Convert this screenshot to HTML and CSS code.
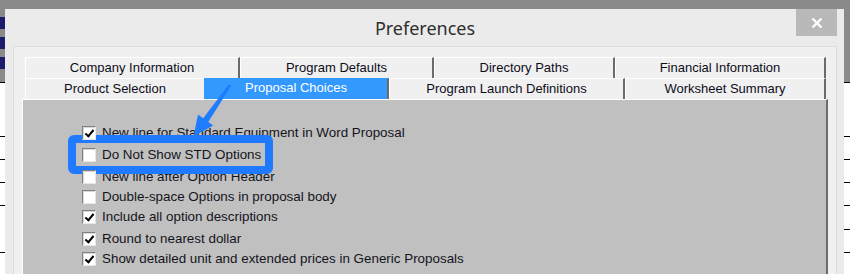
FILE: index.html
```html
<!DOCTYPE html>
<html lang="en">
<head>
  <meta charset="UTF-8" />
  <title>Preferences</title>
  <link rel="stylesheet" href="styles.css">
</head>
<body>
  <div class="screen">
    <div class="edge edge-left">
      <div class="edge-top">
        <span class="bar"></span>
        <span class="bar"></span>
        <span class="bar"></span>
      </div>
      <div class="edge-bottom">
        <span class="tick"></span>
        <span class="tick gap-53"></span>
        <span class="tick gap-22"></span>
        <span class="tick gap-22"></span>
        <span class="tick gap-22"></span>
        <span class="tick gap-46"></span>
      </div>
    </div>

    <div class="dialog">
      <div class="titlebar">
        <span></span>
        <h1 class="title">Preferences</h1>
        <button class="close" aria-label="Close">
          <svg width="12" height="10" viewBox="0 0 12 10">
            <path d="M1.5 0.5 L10.5 9.5 M10.5 0.5 L1.5 9.5" stroke="#fff" stroke-width="2.2" fill="none"/>
          </svg>
        </button>
      </div>

      <div class="frame">
        <div class="tabs">
          <div class="tab-row tab-row-back">
            <div class="tab w-company">Company Information</div>
            <div class="tab w-defaults">Program Defaults</div>
            <div class="tab w-paths">Directory Paths</div>
            <div class="tab w-financial">Financial Information</div>
          </div>
          <div class="tab-row tab-row-front">
            <div class="tab w-product">Product Selection</div>
            <div class="tab tab-active w-proposal">Proposal Choices</div>
            <div class="tab w-launch">Program Launch Definitions</div>
            <div class="tab w-worksheet">Worksheet Summary</div>
          </div>
        </div>

        <div class="panel">
          <div class="highlight"></div>
          <ul class="options">
            <li class="option option-tall"><span class="box checked"></span>New line for Standard Equipment in Word Proposal</li>
            <li class="option option-tall"><span class="box"></span>Do Not Show STD Options</li>
            <li class="option"><span class="box"></span>New line after Option Header</li>
            <li class="option"><span class="box"></span>Double-space Options in proposal body</li>
            <li class="option option-tall"><span class="box checked"></span>Include all option descriptions</li>
            <li class="option"><span class="box checked"></span>Round to nearest dollar</li>
            <li class="option"><span class="box checked"></span>Show detailed unit and extended prices in Generic Proposals</li>
          </ul>
        </div>
      </div>
    </div>

    <div class="edge edge-right">
      <div class="edge-top"></div>
      <div class="edge-bottom">
        <span class="tick"></span>
        <span class="tick gap-53"></span>
        <span class="tick gap-22"></span>
        <span class="tick gap-22"></span>
        <span class="tick gap-22"></span>
        <span class="tick gap-23"></span>
        <span class="tick gap-22"></span>
      </div>
    </div>

    <!-- callout arrow pointing at the highlighted option -->
    <svg class="pointer" width="850" height="274" viewBox="0 0 850 274">
      <polygon points="229,84.3 231.2,85.8 208.2,121.9 213.2,125.6 193.5,136.5 198,114.6 203.2,118.2" fill="#1f7cff"/>
    </svg>
  </div>
</body>
</html>
```

FILE: styles.css
```css
/* Reset & Base */
* {
  box-sizing: border-box;
  margin: 0;
  padding: 0;
}

body {
  font-family: 'Liberation Sans', Arial, sans-serif;
  font-size: 13px;
  color: #111;
  background: #8a8a8a;
  width: 850px;
  height: 274px;
  overflow: hidden;
}

.screen {
  position: relative;
  display: flex;
  height: 274px;
  padding-top: 9px;
  background: #8a8a8a;
}

/* Windows peeking out behind the dialog */
.edge {
  display: flex;
  flex-direction: column;
}

.edge-left {
  width: 5px;
}

.edge-right {
  width: 6px;
}

.edge-top {
  height: 73px;
  padding-top: 8px;
  display: flex;
  flex-direction: column;
  gap: 8px;
}

.bar {
  display: block;
  height: 12px;
  background: #1d1b6c;
}

.edge-bottom {
  flex: 1;
  background: #fff;
  display: flex;
  flex-direction: column;
}

.tick {
  display: block;
  height: 1px;
  background: #000;
}

.gap-22 { margin-top: 22px; }
.gap-23 { margin-top: 23px; }
.gap-46 { margin-top: 46px; }
.gap-53 { margin-top: 53px; }

/* Dialog */
.dialog {
  width: 839px;
  background: #ebebeb;
  padding: 0 7px 0 8px;
  display: flex;
  flex-direction: column;
}

.titlebar {
  height: 37px;
  display: grid;
  grid-template-columns: 1fr auto 1fr;
  align-items: start;
}

.title {
  font-family: 'Noto Sans', sans-serif;
  font-weight: 400;
  font-size: 18px;
  line-height: 24px;
  padding-top: 7px;
  color: #2e2e2e;
}

.close {
  justify-self: end;
  width: 41px;
  height: 27px;
  border: none;
  background: #b9b9b9;
  display: flex;
  align-items: center;
  justify-content: center;
}

.close svg {
  display: block;
}

.frame {
  flex: 1;
  background: #f0f0f0;
  border: 1px solid #dcdcdc;
  border-bottom: none;
  padding-top: 10px;
}

/* Tabs */
.tabs {
  margin-left: 11px;
}

.tab-row {
  display: flex;
  align-items: flex-end;
}

.tab {
  background: #f0f0f0;
  border-top: 1px solid #fff;
  border-left: 1px solid #fff;
  border-right: 2px solid #6b6b6b;
  text-align: center;
  white-space: nowrap;
  color: #0d0d1a;
}

.tab-row-back .tab {
  height: 21px;
  line-height: 20px;
}

.tab-row-front .tab {
  height: 21px;
  line-height: 20px;
}

.tab-active {
  position: relative;
  height: 22px;
  margin-top: -1px;
  margin-bottom: -1px;
  line-height: 18px;
  background: #3399ff;
  border-top-color: #3399ff;
  border-left-color: #3399ff;
  color: #fff;
}

.w-company { width: 215px; }
.w-defaults { width: 194px; }
.w-paths { width: 181px; }
.w-financial { width: 211px; }
.w-product { width: 179px; border-right: none; }
.tab-row-front .w-proposal { width: 185px; height: 22px; line-height: 18px; }
.w-launch { width: 236px; }
.w-worksheet { width: 201px; }

/* Option panel */
.panel {
  position: relative;
  margin-left: 8px;
  width: 806px;
  height: 175px;
  background: #c0c0c0;
  border-top: 1px solid #fff;
  border-left: 1px solid #fff;
  border-right: 2px solid #6b6b6b;
  padding: 23px 0 0 59px;
}

.options {
  list-style: none;
}

.option {
  display: flex;
  align-items: center;
  height: 20px;
  line-height: 20px;
  gap: 6px;
  font-size: 13.4px;
  color: #14141c;
  white-space: nowrap;
}

.option-tall {
  height: 22px;
  padding-bottom: 2px;
}

.box {
  width: 14px;
  height: 14px;
  background: #fff;
  border: 1px solid;
  border-color: #808080 #e6e6e6 #e6e6e6 #808080;
  box-shadow: inset 1px 1px 0 #d8d8d8;
  position: relative;
}

.box.checked::after {
  content: "";
  position: absolute;
  left: 3.5px;
  top: 1px;
  width: 3px;
  height: 7px;
  border-right: 2px solid #000;
  border-bottom: 2px solid #000;
  transform: rotate(40deg);
}

.highlight {
  position: absolute;
  left: 45px;
  top: 35px;
  width: 205px;
  height: 39px;
  border: 8px solid #1f7aff;
  border-radius: 6px;
}

.pointer {
  position: absolute;
  left: 0;
  top: 0;
  pointer-events: none;
}
```
